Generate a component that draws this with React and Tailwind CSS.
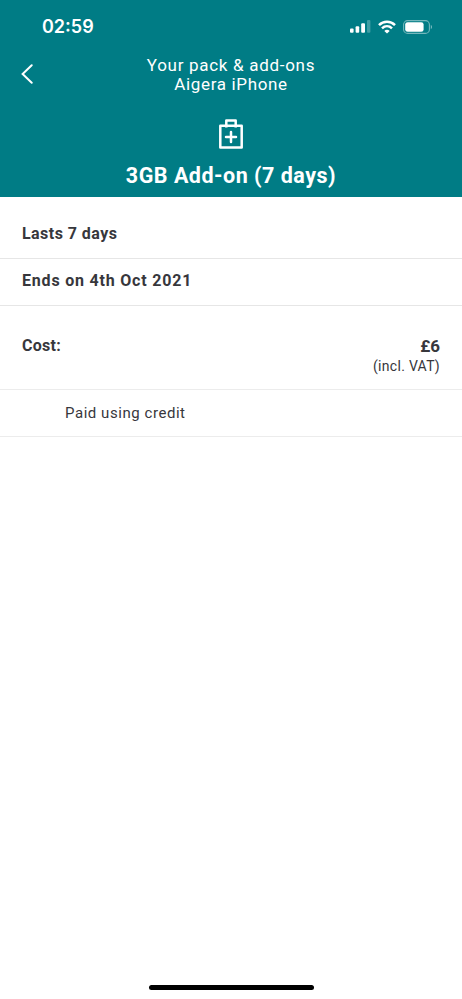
import React from 'react'

const SignalIcon = () => (
  <svg width="21" height="13" viewBox="0 0 21 13" fill="white">
    <rect x="0" y="8.5" width="3.6" height="4.2" rx="1" />
    <rect x="5.6" y="6.2" width="3.6" height="6.5" rx="1" />
    <rect x="11.2" y="3.2" width="3.8" height="9.5" rx="1" />
    <rect x="17" y="0" width="3.4" height="12.7" rx="1" opacity="0.25" />
  </svg>
)

const WifiIcon = () => (
  <svg width="18" height="14" viewBox="0 0 18 14" fill="none" stroke="white" strokeWidth="2.5">
    <path d="M1 5.1C5.5 0.6 12.5 0.6 17 5.1" />
    <path d="M4 8.4C6.9 5.6 11.1 5.6 14 8.4" />
    <path d="M9 13.6L6.3 10.9C7.8 9.5 10.2 9.5 11.7 10.9Z" fill="white" stroke="none" />
  </svg>
)

const BatteryIcon = () => (
  <svg width="30" height="14" viewBox="0 0 30 14" fill="none">
    <rect x="0.6" y="0.6" width="25.8" height="12.8" rx="4" stroke="white" strokeOpacity="0.45" strokeWidth="1.1" />
    <rect x="2.2" y="2.2" width="18.4" height="9.6" rx="2.4" fill="white" />
    <path d="M27.8 4.8V9.2C29.4 8.4 29.4 5.6 27.8 4.8Z" fill="white" fillOpacity="0.5" />
  </svg>
)

const AddonIcon = () => (
  <svg width="24" height="30" viewBox="0 0 24 30" fill="none" stroke="white" strokeWidth="2.5" strokeLinejoin="round">
    <path d="M1.3 6.7H22.7V28.5H1.3Z" />
    <path d="M7.3 8.6V1.6H16.7V8.6" />
    <path d="M12 13V23M7 18H17" strokeLinecap="round" />
  </svg>
)

const StatusBar = () => (
  <div className="flex h-[53px] items-center justify-between pl-[42px] pr-[29px]">
    <span className="font-['Inter',sans-serif] text-[18px] font-semibold leading-[22px]">02:59</span>
    <div className="flex items-center gap-[7px]">
      <SignalIcon />
      <WifiIcon />
      <BatteryIcon />
    </div>
  </div>
)

const App = () => {
  return (
    <div className="flex h-[999px] w-[462px] flex-col overflow-hidden bg-white font-['Roboto',sans-serif] text-[#37373c]">
      <header className="h-[197px] shrink-0 bg-[#007c85] text-white">
        <StatusBar />
        <div className="grid grid-cols-[60px_1fr_60px] items-start pt-[2px]">
          <button type="button" aria-label="Back" className="ml-[21px] mt-[9px] w-3">
            <svg width="12" height="20" viewBox="0 0 12 20" fill="none" stroke="white" strokeWidth="2" strokeLinecap="round">
              <path d="M10.7 1.2L1.6 10L10.7 18.8" />
            </svg>
          </button>
          <div className="pt-px text-center text-[17px] leading-[19px]">
            <p className="tracking-[0.7px]">Your pack &amp; add-ons</p>
            <p className="tracking-[0.65px]">Aigera iPhone</p>
          </div>
        </div>
        <div className="flex flex-col items-center pt-[25px]">
          <AddonIcon />
          <h1 className="mt-[15px] text-[21.5px] font-bold leading-6 tracking-[0.5px]">3GB Add-on (7 days)</h1>
        </div>
      </header>

      <main className="text-[16px] leading-5">
        <div className="h-[62px] border-b border-[#e6e6e6] px-[22px] pt-[27px] font-bold">
          <p className="tracking-[0.45px]">Lasts 7 days</p>
        </div>
        <div className="flex h-[47px] items-center border-b border-[#e6e6e6] px-[22px] pb-[2px] font-bold">
          <p className="tracking-[0.8px]">Ends on 4th Oct 2021</p>
        </div>
        <div className="flex h-[84px] justify-between border-b border-[#ececec] px-[22px] pt-[30px]">
          <p className="font-bold tracking-[0.3px]">Cost:</p>
          <div className="text-right">
            <p className="text-[17px] font-bold">£6</p>
            <p className="text-[14px] tracking-[0.3px]">(incl. VAT)</p>
          </div>
        </div>
        <div className="flex h-[47px] items-center border-b border-[#ececec] pl-[65px]">
          <p className="text-[15px] tracking-[0.55px]">Paid using credit</p>
        </div>
      </main>

      <div className="mx-auto mb-[9px] mt-auto h-[5px] w-[165px] rounded-full bg-black" />
    </div>
  )
}

export default App
